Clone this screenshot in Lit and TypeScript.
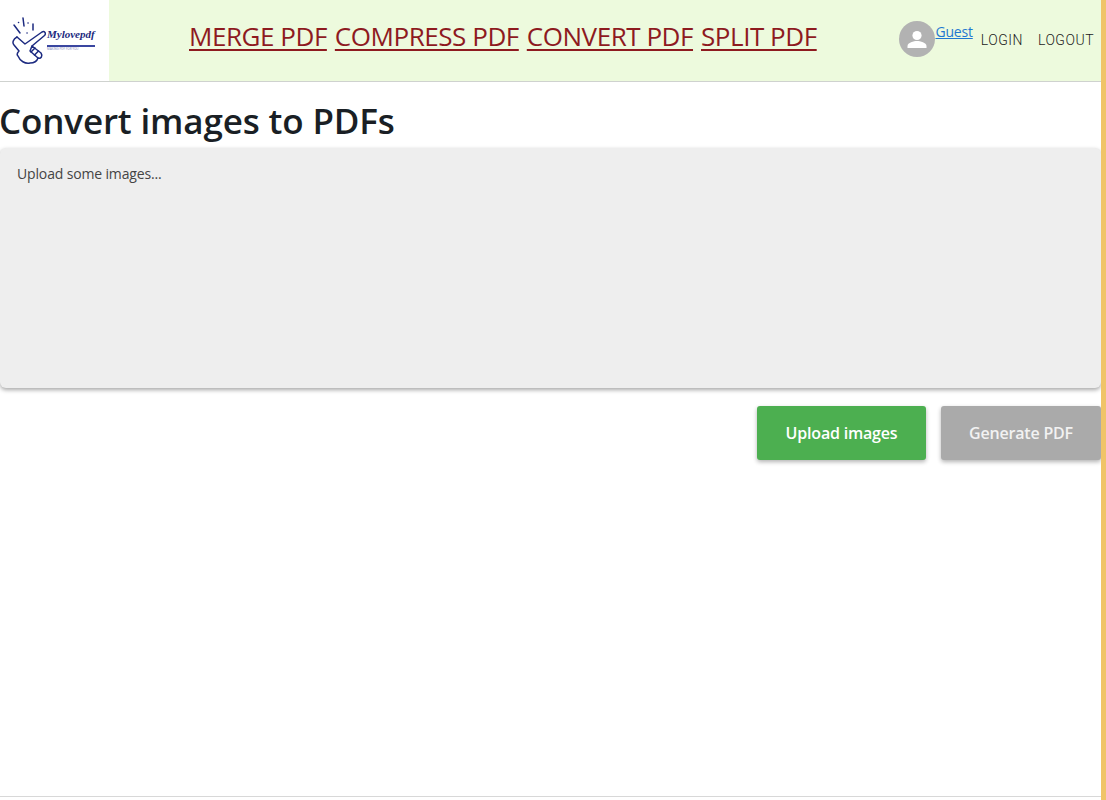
import {css, html, LitElement} from 'lit';
import {customElement} from 'lit/decorators.js';

@customElement('app-root')
export class AppRoot extends LitElement {
  render() {
    return html`
      <div class="page">
        <div class="main">
          <header class="bar">
            <div class="logo">
              <svg width="34" height="50" viewBox="12 15 34 50" fill="none" stroke="#1c2a80" stroke-width="1.5" stroke-linecap="round" stroke-linejoin="round">
                <path d="M14 24l6 8M23 17l1 8M33 23v6M28 22h.1M27 32h.1M18.500 21.500h.1" />
                <path d="M17 36L25 43L42 31C44.500 29.500 46.500 32.500 44.500 34.500L32 45" />
                <path d="M17 36C13 38 12 42 14 44L19 50C17 52 17 54 18 55C20 60 25 63 30 62C34 62 37 60 38 57" />
                <path d="M32 45L41 52C43 55 41 58 38 57L30 50z" />
                <path d="M35 47L31 51M38.500 50L34.500 54" />
              </svg>
              <div class="brand">
                <span class="brand-name">Mylovepdf</span>
                <span class="brand-sub">MAKING PDF FOR YOU</span>
              </div>
            </div>
            <nav class="nav">
              <a href="#">MERGE PDF</a>
              <a href="#">COMPRESS PDF</a>
              <a href="#">CONVERT PDF</a>
              <a href="#">SPLIT PDF</a>
            </nav>
            <div class="user">
              <span class="avatar">
                <svg width="36" height="36" viewBox="0 0 36 36" fill="#fff">
                  <circle cx="18" cy="14.5" r="4.6" />
                  <path d="M8.500 27v-2c0-3.400 6.300-5 9.500-5s9.500 1.600 9.500 5v2z" />
                </svg>
              </span>
              <a class="guest" href="#">Guest</a>
              <span class="action login">LOGIN</span>
              <span class="action">LOGOUT</span>
            </div>
          </header>
          <h1>Convert images to PDFs</h1>
          <section class="dropzone">Upload some images...</section>
          <div class="buttons">
            <button class="upload">Upload images</button>
            <button class="generate">Generate PDF</button>
          </div>
          <div class="spacer"></div>
          <div class="foot"></div>
        </div>
        <div class="edge"></div>
      </div>
    `;
  }

  static styles = css`
    :host {
      display: block;
      font-family: 'Open Sans', 'Noto Sans', sans-serif;
      color: #212529;
    }

    .page {
      display: flex;
      height: 800px;
      overflow: hidden;
      background: #fff;
    }

    .main {
      flex: 1;
      min-width: 0;
      display: flex;
      flex-direction: column;
    }

    .edge {
      width: 5px;
      background: #f0c468;
    }

    .bar {
      height: 81px;
      flex: none;
      display: flex;
      align-items: center;
      background: #edfadd;
      border-bottom: 1px solid #cfd2cf;
    }

    .logo {
      width: 109px;
      height: 81px;
      flex: none;
      background: #fff;
      display: flex;
      align-items: center;
      padding-left: 12px;
      box-sizing: border-box;
    }

    .brand {
      display: flex;
      flex-direction: column;
      margin: -3px 0 0 1px;
    }

    .brand-name {
      font-family: 'Liberation Serif', serif;
      font-style: italic;
      font-weight: 700;
      font-size: 11px;
      line-height: 14px;
      padding-bottom: 4px;
      color: #1c2a80;
      border-bottom: 2px solid #3a46a0;
    }

    .brand-sub {
      font-size: 3px;
      line-height: 5px;
      color: #7a80b8;
      white-space: nowrap;
    }

    .nav {
      display: flex;
      gap: 8px;
      margin-left: 80px;
      padding-bottom: 10px;
      font-size: 26px;
      letter-spacing: -0.45px;
    }

    .nav a {
      color: #8e1a1f;
      text-underline-offset: 3px;
      white-space: nowrap;
    }

    .user {
      margin-left: auto;
      display: flex;
      align-items: center;
      padding: 0 7px 4px 0;
    }

    .avatar {
      width: 36px;
      height: 36px;
      border-radius: 50%;
      background: #b2b2b2;
      display: block;
    }

    .guest {
      align-self: flex-start;
      font-size: 14px;
      line-height: 20px;
      letter-spacing: -0.2px;
      color: #1f78d1;
      margin-top: 1px;
    }

    .action {
      font-family: Roboto, sans-serif;
      font-size: 14px;
      font-weight: 300;
      line-height: 20px;
      letter-spacing: 0.5px;
      color: #222;
      margin-top: 2px;
    }

    .login {
      margin: 2px 15px 0 8px;
    }

    h1 {
      margin: 16px 0 4px -1px;
      font-size: 35px;
      line-height: 46px;
      font-weight: 600;
      letter-spacing: -0.15px;
      color: #1a1f25;
    }

    .dropzone {
      height: 240px;
      flex: none;
      box-sizing: border-box;
      padding: 16px 17px;
      background: #eee;
      border-radius: 6px;
      box-shadow: 0 2px 4px rgba(0, 0, 0, 0.35);
      font-size: 14px;
      line-height: 20px;
      letter-spacing: -0.15px;
      color: #444;
    }

    .buttons {
      display: flex;
      justify-content: flex-end;
      gap: 15px;
      margin-top: 18px;
    }

    button {
      height: 54px;
      border: none;
      border-radius: 3px;
      font-family: inherit;
      font-size: 16px;
      font-weight: 600;
      letter-spacing: -0.2px;
      color: #fff;
      box-shadow: 0 2px 4px rgba(0, 0, 0, 0.3);
    }

    .upload {
      width: 169px;
      background: #4caf50;
    }

    .generate {
      width: 160px;
      background: #aaa;
      color: #f2f2f2;
    }

    .spacer {
      flex: 1;
    }

    .foot {
      height: 1px;
      margin-bottom: 3px;
      background: #d8d8d8;
    }
  `;
}
